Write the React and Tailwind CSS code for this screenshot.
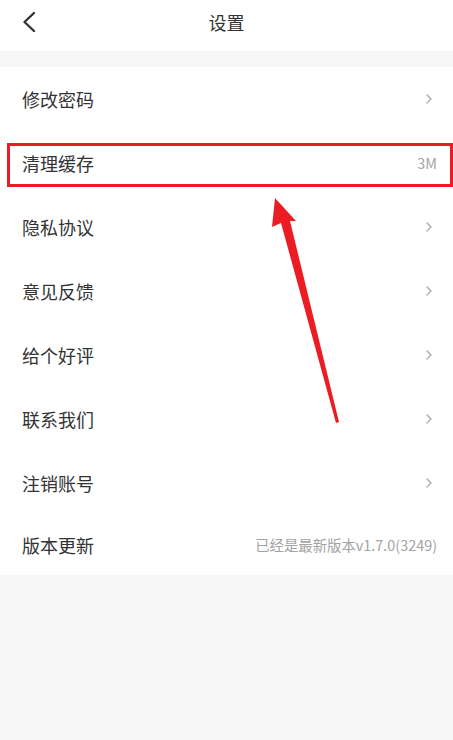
import { ChevronRight } from 'lucide-react'

const rows = [
  { label: '修改密码' },
  { label: '清理缓存', value: '3M' },
  { label: '隐私协议' },
  { label: '意见反馈' },
  { label: '给个好评' },
  { label: '联系我们' },
  { label: '注销账号' },
  { label: '版本更新', value: '已经是最新版本v1.7.0(3249)' },
]

const font = { fontFamily: '"Noto Sans CJK SC", "Noto Sans", sans-serif' }

export default function App() {
  return (
    <div className="relative min-h-[740px] bg-[#f6f6f6] text-[#333]" style={font}>
      {/* header */}
      <div className="relative flex h-[51px] justify-center bg-white pt-[13px]">
        <svg className="absolute left-[21px] top-[11px]" width="16" height="22" viewBox="0 0 16 22" fill="none">
          <path d="M13 2 L3.5 11 L13 20" stroke="#333" strokeWidth="2.4" strokeLinecap="round" strokeLinejoin="round" />
        </svg>
        <h1 className="text-[18px] leading-[18px] text-[#333]">设置</h1>
      </div>

      {/* list */}
      <div className="mt-[16px] bg-white">
        {rows.map((r, i) => (
          <div
            key={r.label}
            className={`flex items-center justify-between pl-[22px] pr-[16px] ${i === rows.length - 1 ? 'h-[60px]' : 'h-[64px]'}`}
          >
            <span className="text-[18px] leading-none">{r.label}</span>
            {r.value
              ? <span className="text-[14.4px] leading-none text-[#a3a3a3]">{r.value}</span>
              : <ChevronRight size={16} strokeWidth={2} className="text-[#aaa]" />}
          </div>
        ))}
      </div>

      {/* annotation: highlight box */}
      <div className="pointer-events-none absolute left-[7px] top-[143px] h-[44px] w-[446px] border-[3px] border-[#ec1c24]" />

      {/* annotation: arrow */}
      <svg className="pointer-events-none absolute left-0 top-0" width="453" height="740" viewBox="0 0 453 740">
        <polygon points="275,198 272,227 281,223 336,423 339,422 290,221 296,221" fill="#ec1c24" />
      </svg>
    </div>
  )
}
